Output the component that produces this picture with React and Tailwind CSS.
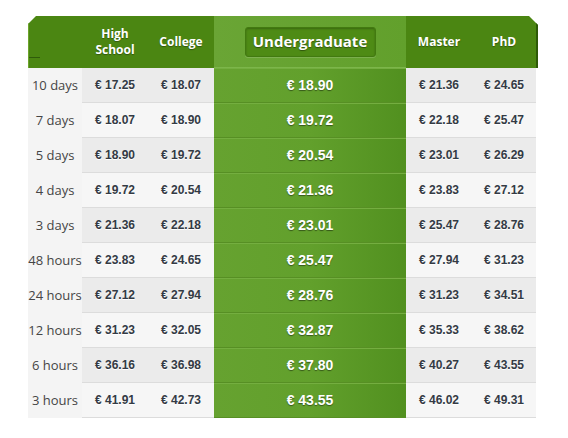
const rows = [
  ["10 days", "17.25", "18.07", "18.90", "21.36", "24.65"],
  ["7 days", "18.07", "18.90", "19.72", "22.18", "25.47"],
  ["5 days", "18.90", "19.72", "20.54", "23.01", "26.29"],
  ["4 days", "19.72", "20.54", "21.36", "23.83", "27.12"],
  ["3 days", "21.36", "22.18", "23.01", "25.47", "28.76"],
  ["48 hours", "23.83", "24.65", "25.47", "27.94", "31.23"],
  ["24 hours", "27.12", "27.94", "28.76", "31.23", "34.51"],
  ["12 hours", "31.23", "32.05", "32.87", "35.33", "38.62"],
  ["6 hours", "36.16", "36.98", "37.80", "40.27", "43.55"],
  ["3 hours", "41.91", "42.73", "43.55", "46.02", "49.31"],
];

const headText =
  "font-['Open_Sans',sans-serif] text-[12px] font-bold leading-[16px] text-white [text-shadow:0_1px_1px_rgba(0,0,0,0.35)]";

function PriceCell({ value, width, odd }) {
  return (
    <div
      className={`${width} h-[35px] flex items-center justify-center border-b border-[#dcdcdc] font-['Liberation_Sans',sans-serif] text-[12px] font-bold text-[#333a44] [text-shadow:0_1px_0_#fff] ${
        odd ? "bg-[#ebebeb]" : "bg-[#f6f6f6]"
      }`}
    >
      € {value}
    </div>
  );
}

export default function App() {
  return (
    <div className="w-[568px] h-[438px] bg-white pl-[28px] pt-[16px]">
      <div className="w-[510px] relative">
        {/* header */}
        <div className="flex h-[52px]">
          <div className="w-[186px] flex bg-[#4b8612] [clip-path:polygon(8px_0,100%_0,100%_100%,0_100%,0_8px)] border-l border-[#6da52c] relative">
            <div className="absolute left-0 bottom-[10px] w-[11px] h-px bg-[#2f5c0a]" />
            <div className="w-[53px]" />
            <div className={`w-[66px] flex items-center justify-center text-center ${headText}`}>
              High
              <br />
              School
            </div>
            <div className={`w-[66px] flex items-center justify-center ${headText}`}>College</div>
          </div>
          <div className="w-[192px] flex items-center justify-center bg-gradient-to-r from-[#6aa535] to-[#62a02c] border-b border-[#7cb64a]">
            <div className="w-[131px] h-[30px] flex items-center justify-center rounded-[3px] bg-[#4e8b15] border border-[#427a10] shadow-[inset_0_1px_2px_rgba(0,0,0,0.25),0_1px_0_rgba(255,255,255,0.15)] font-['Open_Sans',sans-serif] text-[15px] font-bold text-white [text-shadow:0_1px_1px_rgba(0,0,0,0.4)]">
              Undergraduate
            </div>
          </div>
          <div className="w-[132px] flex bg-[#4b8612] [clip-path:polygon(0_0,calc(100%-9px)_0,100%_9px,100%_100%,0_100%)] border-r-2 border-[#2e5a08]">
            <div className={`w-[66px] flex items-center justify-center ${headText}`}>Master</div>
            <div className={`w-[64px] flex items-center justify-center ${headText}`}>PhD</div>
          </div>
        </div>

        {/* body */}
        {rows.map((r, i) => {
          const odd = i % 2 === 0;
          return (
            <div key={r[0]} className="flex">
              <div className="w-[54px] h-[35px] flex items-center justify-center bg-[#f4f4f4] font-['Open_Sans',sans-serif] text-[13px] text-[#454545]">
                {r[0]}
              </div>
              <PriceCell value={r[1]} width="w-[66px]" odd={odd} />
              <PriceCell value={r[2]} width="w-[66px]" odd={odd} />
              <div className="w-[192px] h-[35px] flex items-center justify-center bg-gradient-to-r from-[#66a230] via-[#62a02c] to-[#51901f] border-t border-[#74ae40] border-b border-b-[#578f24] font-['Liberation_Sans',sans-serif] text-[14px] font-bold text-white [text-shadow:0_1px_1px_rgba(0,0,0,0.45)]">
                € {r[3]}
              </div>
              <PriceCell value={r[4]} width="w-[66px]" odd={odd} />
              <PriceCell value={r[5]} width="w-[64px]" odd={odd} />
            </div>
          );
        })}
      </div>
    </div>
  );
}
